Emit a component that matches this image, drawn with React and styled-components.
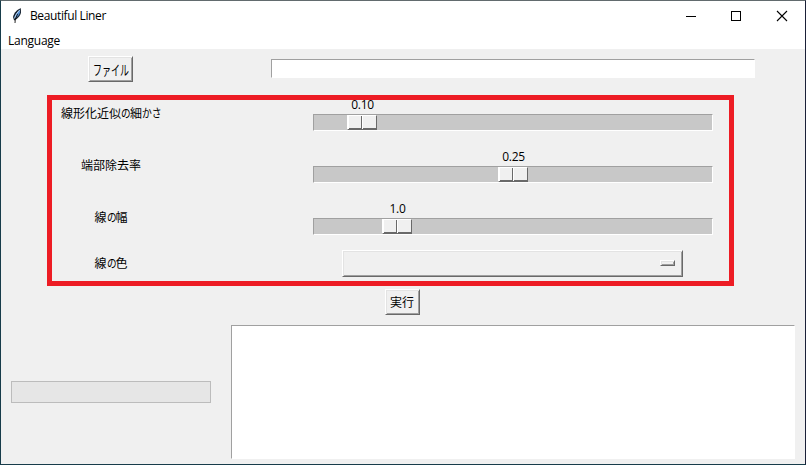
import React from "react";
import styled, { createGlobalStyle } from "styled-components";

const GlobalStyle = createGlobalStyle`
  * { box-sizing: border-box; }
  body {
    margin: 0;
    overflow: hidden;
    font-family: "Open Sans", "Noto Sans CJK JP", sans-serif;
    font-size: 12px;
    color: #000;
  }
`;

const Window = styled.div`
  width: 806px;
  height: 465px;
  display: flex;
  flex-direction: column;
  position: relative;
  background: #f0f0f0;
  border: 1px solid #173c4a;
  border-top-color: #626b6e;
  border-right-color: #1b2038;
`;

const TitleBar = styled.header`
  height: 30px;
  flex: none;
  display: flex;
  align-items: center;
  background: #fff;
  padding-left: 9px;
`;

const Title = styled.span`
  margin-left: 6px;
  flex: 1;
  line-height: 16px;
  letter-spacing: -0.38px;
`;

const Control = styled.svg`
  display: block;
  width: 46px;
  height: 29px;
  flex: none;
`;

const MenuBar = styled.nav`
  height: 18px;
  flex: none;
  background: #fff;
  padding-left: 7px;
  line-height: 20px;
  letter-spacing: -0.25px;
`;

const Body = styled.main`
  flex: 1;
  padding: 0 10px;
  display: flex;
  flex-direction: column;
`;

const Row = styled.div`
  display: grid;
  grid-template-columns: 200px 564px;
  column-gap: 20px;
  align-items: center;
  justify-items: center;
  height: ${(p) => p.$height}px;
  padding-top: ${(p) => p.$top || 0}px;
`;

const Label = styled.span`
  line-height: 16px;
  white-space: nowrap;
  display: flex;
  padding-top: 1px;
`;

const Glyphs = styled.span`
  display: inline-block;
  width: ${(p) => p.$width}px;
  white-space: nowrap;
  transform: scaleX(${(p) => p.$scale || 1});
  transform-origin: left;
`;

const Button = styled.button`
  width: ${(p) => p.$width}px;
  height: 26px;
  margin-right: ${(p) => p.$shift || 0}px;
  padding: 0 0 0 4px;
  display: flex;
  align-items: center;
  font: inherit;
  font-size: ${(p) => p.$size || 12}px;
  color: inherit;
  background: #f0f0f0;
  border: 1px solid;
  border-color: #fff #696969 #696969 #fff;
  box-shadow: inset 1px 1px #e3e3e3, inset -1px -1px #a0a0a0;
`;

const Entry = styled.input`
  width: 484px;
  height: 19px;
  margin-bottom: 1px;
  padding: 0 2px;
  outline: 0;
  background: #fff;
  border: 1px solid;
  border-color: #a0a0a0 #fff #fff #a0a0a0;
  border-radius: 0;
`;

const Scale = styled.div`
  width: 400px;
  height: 52px;
  padding-top: 10px;
`;

const ScaleValue = styled.div`
  width: 31px;
  margin-left: ${(p) => p.$offset}px;
  height: 17px;
  line-height: 16px;
  text-align: center;
  letter-spacing: -0.35px;
`;

const Track = styled.div`
  height: 17px;
  background: #c8c8c8;
  border: 1px solid;
  border-color: #a0a0a0 #fff #fff #a0a0a0;
`;

const Thumb = styled.div`
  width: 30px;
  height: 15px;
  margin-left: ${(p) => p.$offset - 1}px;
  display: flex;
  background: #f0f0f0;
  border: 1px solid;
  border-color: #fff #696969 #696969 #fff;
  box-shadow: inset 0 -1px #696969;
`;

const ThumbHalf = styled.span`
  width: 14px;
  border-right: ${(p) => (p.$first ? "1px solid #696969" : "0")};
  border-left: 1px solid #fff;
`;

const OptionMenu = styled.button`
  width: 341px;
  height: 27px;
  margin-right: 1px;
  padding: 0 7px 0 0;
  display: flex;
  align-items: center;
  justify-content: flex-end;
  background: #f0f0f0;
  border: 1px solid;
  border-color: #fff #696969 #696969 #fff;
  box-shadow: inset 1px 1px #e3e3e3, inset -1px -1px #a0a0a0;
`;

const Indicator = styled.span`
  width: 15px;
  height: 6px;
  margin-bottom: 1px;
  border: 1px solid;
  border-color: #fff #696969 #696969 #fff;
  box-shadow: inset 1px 1px #e3e3e3, inset -1px -1px #a0a0a0;
`;

const Execute = styled.div`
  height: 36px;
  padding-top: 5px;
  padding-left: 374px;
`;

const Progress = styled.div`
  width: 200px;
  height: 22px;
  background: #e6e6e6;
  border: 1px solid #bcbcbc;
`;

const Output = styled.textarea`
  width: 564px;
  height: 134px;
  resize: none;
  outline: 0;
  background: #fff;
  border: 1px solid;
  border-color: #a0a0a0 #fff #fff #a0a0a0;
  border-radius: 0;
`;

const Highlight = styled.div`
  position: absolute;
  left: 46px;
  top: 94px;
  width: 687px;
  height: 191px;
  border: 5px solid #ed1c24;
  pointer-events: none;
`;

function Feather() {
  return (
    <svg width="14" height="16" viewBox="0 0 14 16">
      <path d="M10.9 .3C7.3 1.2 3.9 4.8 3 9.1L4.1 12.5C7.2 11.2 10.4 8 11 4.2Z" fill="#17212c" />
      <path d="M10 1.7C7 3.9 4.6 7 4.3 10.5C7.3 9.4 9.5 7 10.1 4.2Z" fill="#5592d8" />
      <path d="M9.9 1.8C7.2 4.6 5.2 7.4 4.6 10.4" fill="none" stroke="#c4dcf6" strokeWidth=".9" />
      <path d="M7.7 5.8L5.3 11.2L5 15" fill="none" stroke="#111" strokeWidth=".9" />
    </svg>
  );
}

const no = { text: "の", width: 9, scale: 0.8 };

const sliders = [
  {
    label: [
      { text: "線形化近似", width: 60 },
      no,
      { text: "細", width: 12 },
      { text: "かさ", width: 19, scale: 0.82 },
    ],
    value: "0.10",
    offset: 34,
  },
  { label: [{ text: "端部除去率", width: 60 }], value: "0.25", offset: 185 },
  {
    label: [{ text: "線", width: 12 }, no, { text: "幅", width: 12 }],
    value: "1.0",
    offset: 69,
  },
];

const colorLabel = [{ text: "線", width: 12 }, no, { text: "色", width: 12 }];

function FieldLabel({ parts }) {
  return (
    <Label>
      {parts.map((p) => (
        <Glyphs key={p.text} $width={p.width} $scale={p.scale}>
          {p.text}
        </Glyphs>
      ))}
    </Label>
  );
}

function Slider({ label, value, offset }) {
  return (
    <Row $height={52}>
      <FieldLabel parts={label} />
      <Scale>
        <ScaleValue $offset={offset}>{value}</ScaleValue>
        <Track>
          <Thumb $offset={offset}>
            <ThumbHalf $first />
            <ThumbHalf />
          </Thumb>
        </Track>
      </Scale>
    </Row>
  );
}

export default function App() {
  return (
    <>
      <GlobalStyle />
      <Window>
        <TitleBar>
          <Feather />
          <Title>Beautiful Liner</Title>
          <Control viewBox="0 0 46 29" shapeRendering="crispEdges">
            <path d="M19 14.5h10" stroke="#000" fill="none" />
          </Control>
          <Control viewBox="0 0 46 29" shapeRendering="crispEdges">
            <rect x="18.5" y="9.5" width="9" height="9" stroke="#000" fill="none" />
          </Control>
          <Control viewBox="0 0 46 29">
            <path d="M18 9l10 10M28 9l-10 10" stroke="#000" strokeWidth="1.1" fill="none" />
          </Control>
        </TitleBar>
        <MenuBar>Language</MenuBar>
        <Body>
          <Row $height={38} $top={2}>
            <Button $width={45} $shift={1} $size={14}>
              <Glyphs $width={35} $scale={0.64}>ファイル</Glyphs>
            </Button>
            <Entry aria-label="ファイル" />
          </Row>
          {sliders.map((s) => (
            <Slider key={s.value} {...s} />
          ))}
          <Row $height={41}>
            <FieldLabel parts={colorLabel} />
            <OptionMenu aria-label="線の色">
              <Indicator />
            </OptionMenu>
          </Row>
          <Execute>
            <Button $width={35}>実行</Button>
          </Execute>
          <Row $height={144}>
            <Progress />
            <Output />
          </Row>
        </Body>
        <Highlight />
      </Window>
    </>
  );
}
